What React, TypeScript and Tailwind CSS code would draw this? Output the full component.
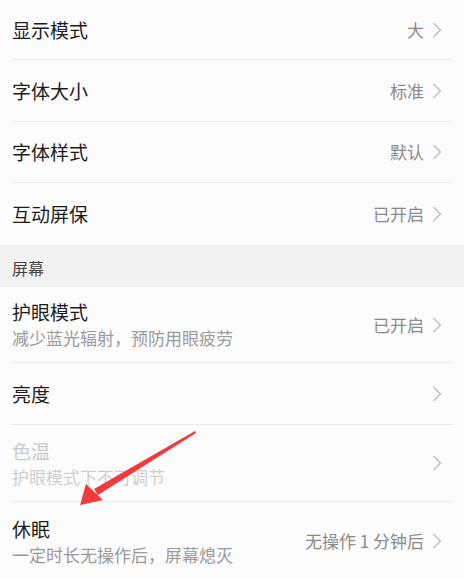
import React from 'react';

type Row = {
  title: string;
  sub?: string;
  value?: string;
  disabled?: boolean;
  h: string;
  last?: boolean;
};

function Chevron() {
  return (
    <svg width="10" height="18" viewBox="0 0 10 18" className="shrink-0 ml-[8px]">
      <path d="M1.5 2 L8.5 9 L1.5 16" fill="none" stroke="#bdbdbd" strokeWidth="1.4" />
    </svg>
  );
}

function SettingRow({ title, sub, value, disabled, h, last }: Row) {
  return (
    <div className={`mx-[12px] flex items-center ${h} ${last ? '' : 'border-b border-[#ececec]'}`}>
      <div className="flex-1 flex flex-col">
        <span className={`text-[19px] leading-[24px] ${disabled ? 'text-[#c9c9c9]' : 'text-[#1c1c1c]'}`}>{title}</span>
        {sub && (
          <span className={`text-[17px] leading-[22px] mt-[3px] ${disabled ? 'text-[#cfcfcf]' : 'text-[#9a9a9a]'}`}>{sub}</span>
        )}
      </div>
      {value && <span className="text-[17px] text-[#8a8a8a]">{value}</span>}
      <Chevron />
      <div className="w-[10px]" />
    </div>
  );
}

export default function App() {
  return (
    <div
      className="relative w-[464px] h-[579px] overflow-hidden bg-[#fcfcfc]"
      style={{ fontFamily: '"Noto Sans CJK SC", "Noto Sans", sans-serif' }}
    >
      <SettingRow title="显示模式" value="大" h="h-[60px]" />
      <SettingRow title="字体大小" value="标准" h="h-[62px]" />
      <SettingRow title="字体样式" value="默认" h="h-[61px]" />
      <SettingRow title="互动屏保" value="已开启" h="h-[62px]" last />
      <div className="h-[42px] bg-[#f2f2f2] px-[12px] flex items-center pt-[4px]">
        <span className="text-[16px] text-[#444]">屏幕</span>
      </div>
      <SettingRow title="护眼模式" sub="减少蓝光辐射，预防用眼疲劳" value="已开启" h="h-[76px]" />
      <SettingRow title="亮度" h="h-[62px]" />
      <SettingRow title="色温" sub="护眼模式下不可调节" disabled h="h-[77px]" />
      <SettingRow title="休眠" sub="一定时长无操作后，屏幕熄灭" value="无操作 1 分钟后" h="h-[78px]" last />

      <svg className="absolute left-0 top-0 pointer-events-none" width="464" height="579" viewBox="0 0 464 579">
        <polygon points="195,431 196,433 98,495 94,489" fill="#ef3b3b" />
        <polygon points="80,505 86,484 103,500" fill="#ef3b3b" />
      </svg>
    </div>
  );
}
